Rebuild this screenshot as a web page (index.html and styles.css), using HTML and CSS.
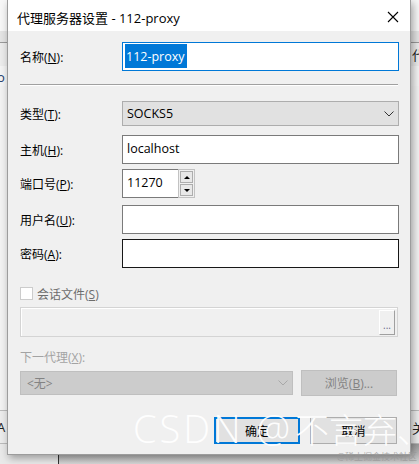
FILE: index.html
```html
<!DOCTYPE html>
<html lang="zh-CN">

<head>
    <meta charset="UTF-8">
    <meta name="viewport" content="width=device-width, initial-scale=1.0">
    <title>代理服务器设置</title>
    <link rel="stylesheet" href="styles.css">
</head>

<body>
    <!-- the app window behind the dialog -->
    <div class="backdrop">
        <div class="bg-title"></div>
        <div class="bg-band"></div>
        <div class="bg-row"><span class="bg-l"></span><span class="bg-r">代</span></div>
        <div class="bg-row bg-row2"><span class="bg-l">o</span><span class="bg-r"></span></div>
        <div class="bg-fill"></div>
        <div class="bg-row bg-low"><span class="bg-l">A</span><span class="bg-r">关</span></div>
        <div class="bg-foot"></div>
    </div>

    <div class="dialog">
        <div class="titlebar">
            <span class="title">代理服务器设置 - 112-proxy</span>
            <svg class="close" width="12" height="12" viewBox="0 0 12 12">
                <path d="M1 1 L11 11 M11 1 L1 11" stroke="#000" stroke-width="1.1" fill="none" />
            </svg>
        </div>

        <div class="content">
            <div class="row r-name">
                <label>名称(<u>N</u>):</label>
                <div class="edit focused"><span class="sel">112-proxy</span></div>
            </div>

            <div class="sep"></div>

            <div class="row r-type">
                <label>类型(<u>T</u>):</label>
                <div class="combo">
                    <span>SOCKS5</span>
                    <svg class="chev" width="10" height="6" viewBox="0 0 10 6">
                        <path d="M0.5 0.5 L5 5 L9.5 0.5" stroke="#333" fill="none" />
                    </svg>
                </div>
            </div>

            <div class="row r-host">
                <label>主机(<u>H</u>):</label>
                <div class="edit"><span>localhost</span></div>
            </div>

            <div class="row r-port">
                <label>端口号(<u>P</u>):</label>
                <div class="port-wrap">
                    <div class="edit port"><span>11270</span></div>
                    <div class="spin">
                        <div class="spin-btn"><span class="tri up"></span></div>
                        <div class="spin-btn"><span class="tri down"></span></div>
                    </div>
                </div>
            </div>

            <div class="row r-user">
                <label>用户名(<u>U</u>):</label>
                <div class="edit"></div>
            </div>

            <div class="row r-pass">
                <label>密码(<u>A</u>):</label>
                <div class="edit hover"></div>
            </div>

            <div class="check-row">
                <span class="box"></span>
                <span class="check-label">会话文件(<u>S</u>)</span>
            </div>

            <div class="filebox">
                <div class="dots">...</div>
            </div>

            <div class="next-label">下一代理(<u>X</u>):</div>

            <div class="next-row">
                <div class="combo off">
                    <span>&lt;无&gt;</span>
                    <svg class="chev" width="10" height="6" viewBox="0 0 10 6">
                        <path d="M0.5 0.5 L5 5 L9.5 0.5" stroke="#a8a8a8" fill="none" />
                    </svg>
                </div>
                <div class="btn off browse">浏览(<u>B</u>)...</div>
            </div>

            <div class="actions">
                <div class="btn default">确定</div>
                <div class="btn">取消</div>
            </div>
        </div>
    </div>

    <div class="mark"><span class="mark-latin">CSDN @</span><span class="mark-cjk">不言弃、</span></div>
    <div class="mark-small">@稀土掘金技术社区</div>
</body>

</html>
```

FILE: styles.css
```css
body {
    margin: 0;
    width: 419px;
    height: 464px;
    overflow: hidden;
    position: relative;
    font-family: "Open Sans", "Noto Sans CJK SC", sans-serif;
    font-size: 12px;
    color: #000;
    background: #e9e9e9;
}

/* background window */
.backdrop {
    display: flex;
    flex-direction: column;
    height: 464px;
}

.bg-title {
    height: 31px;
    background: #f7f7f7;
}

.bg-band {
    height: 11px;
    background: #e4e4e4;
    border-bottom: 1px solid #9a9a9a;
}

.bg-row {
    height: 23px;
    display: flex;
    justify-content: space-between;
    align-items: center;
    background: #ececec;
    font-size: 13px;
    color: #222;
}

.bg-row2 {
    height: 20px;
    align-items: flex-end;
    background: #f4f4f4;
    color: #1c3f6c;
}

.bg-l {
    margin-left: -3px;
}

.bg-r {
    margin-right: -6px;
}

.bg-fill {
    flex: 1;
    background: #f2f2f2;
}

.bg-low {
    height: 32px;
    border-top: 1px solid #bbb;
    border-bottom: 1px solid #bbb;
}

.bg-foot {
    height: 20px;
    background: linear-gradient(#9a9a9a, #d6d6d6);
    border-left: 1px solid #333;
    margin-left: 58px;
}

/* dialog window */
.dialog {
    position: absolute;
    left: 7px;
    top: 0;
    width: 404px;
    height: 455px;
    box-sizing: border-box;
    border: 1px solid #9c9c9c;
    border-top: none;
    background: #f0f0f0;
    box-shadow: 2px 3px 8px rgba(0, 0, 0, 0.35);
}

.titlebar {
    height: 31px;
    background: #fff;
    display: flex;
    align-items: center;
    justify-content: space-between;
    padding: 3px 9px 0 9px;
    box-sizing: border-box;
}

.title {
    font-size: 13px;
}

.close {
    margin-right: 2px;
}

.content {
    padding: 11px 11px 0 12px;
}

.row {
    display: flex;
    align-items: center;
}

.row label {
    width: 102px;
    flex: none;
}

.edit {
    width: 277px;
    height: 29px;
    box-sizing: border-box;
    border: 1px solid #7a7a7a;
    background: #fff;
    display: flex;
    align-items: center;
    padding: 0 4px 2px 4px;
    font-size: 12.5px;
}

.edit.focused {
    border-color: #0078d7;
    padding: 1px 2px 0 2px;
    align-items: stretch;
}

.edit.hover {
    border-color: #171717;
}

.sel {
    background: #0078d7;
    color: #fff;
    padding: 0 2px 0 1px;
    display: flex;
    align-items: center;
    height: 24px;
}

.sep {
    margin: 13px 0 0 0;
    width: 378px;
    height: 1px;
    background: #a0a0a0;
    border-bottom: 1px solid #fff;
}

.combo {
    width: 277px;
    height: 25px;
    box-sizing: border-box;
    background: #e1e1e1;
    border: 1px solid #adadad;
    display: flex;
    align-items: center;
    justify-content: space-between;
    padding: 0 4px 1px 4px;
    font-size: 12.5px;
}

.chev {
    margin-top: 1px;
}

.r-type {
    margin-top: 15px;
}

.r-host {
    margin-top: 9px;
}

.r-port {
    margin-top: 5px;
}

.r-user {
    margin-top: 7px;
}

.r-pass {
    margin-top: 5px;
}

.port-wrap {
    display: flex;
}

.edit.port {
    width: 57px;
}

.spin {
    width: 17px;
    height: 29px;
    box-sizing: border-box;
    border: 1px solid #c2c2c2;
    margin-left: -1px;
    background: #f0f0f0;
    display: flex;
    flex-direction: column;
    gap: 1px;
    padding: 1px;
}

.spin-btn {
    flex: 1;
    border: 1px solid #adadad;
    background: #e8e8e8;
    display: flex;
    align-items: center;
    justify-content: center;
}

.tri {
    width: 0;
    height: 0;
    border-left: 3px solid transparent;
    border-right: 3px solid transparent;
}

.tri.up {
    border-bottom: 3px solid #000;
}

.tri.down {
    border-top: 3px solid #000;
}

.check-row {
    margin-top: 19px;
    display: flex;
    align-items: center;
    height: 13px;
}

.box {
    width: 13px;
    height: 13px;
    box-sizing: border-box;
    border: 1px solid #cccccc;
    background: #fff;
}

.check-label {
    margin-left: 4px;
    color: #6d6d6d;
}

.filebox {
    margin-top: 7px;
    width: 378px;
    height: 30px;
    box-sizing: border-box;
    border: 1px solid #d4d4d4;
    box-shadow: inset 1px 1px #fff;
    display: flex;
    justify-content: flex-end;
    padding: 2px 2px 1px 0;
}

.dots {
    width: 16px;
    box-sizing: border-box;
    border-left: 1px solid #fff;
    border-top: 1px solid #fff;
    border-right: 1px solid #a0a0a0;
    border-bottom: 1px solid #a0a0a0;
    font-size: 10px;
    color: #6a6a8a;
    display: flex;
    align-items: flex-end;
    justify-content: center;
    line-height: 14px;
    padding-bottom: 2px;
}

.next-label {
    margin-top: 13px;
    height: 16px;
    line-height: 16px;
    color: #a3a3a3;
}

.next-row {
    margin-top: 4px;
    display: flex;
    align-items: center;
    gap: 8px;
}

.combo.off {
    width: 273px;
    height: 24px;
    background: #cccccc;
    border-color: #bfbfbf;
    color: #838383;
    padding-left: 6px;
    font-size: 12px;
}

.btn {
    width: 87px;
    height: 27px;
    box-sizing: border-box;
    background: #e1e1e1;
    border: 1px solid #adadad;
    display: flex;
    align-items: center;
    justify-content: center;
}

.btn.off {
    background: #cccccc;
    border-color: #bfbfbf;
    color: #838383;
}

.browse {
    width: 96px;
    height: 26px;
}

.btn.default {
    width: 86px;
    border: 2px solid #0078d7;
}

.actions {
    margin-top: 21px;
    display: flex;
    justify-content: flex-end;
    gap: 10px;
    padding-right: 2px;
}

/* watermarks */
.mark {
    position: absolute;
    left: 133px;
    top: 404px;
    width: 286px;
    overflow: hidden;
    display: flex;
    align-items: baseline;
    line-height: 48px;
    color: rgba(255, 255, 255, 0.95);
    white-space: nowrap;
}

.mark-latin {
    font-family: "Open Sans", sans-serif;
    font-weight: 300;
    font-size: 38px;
    letter-spacing: 3px;
}

.mark-cjk {
    font-family: "Noto Sans CJK SC", sans-serif;
    font-weight: 300;
    font-size: 34px;
    margin-left: 2px;
}

.mark-small {
    position: absolute;
    left: 337px;
    top: 451px;
    font-size: 9px;
    line-height: 12px;
    color: rgba(150, 150, 150, 0.75);
    white-space: nowrap;
}
```
